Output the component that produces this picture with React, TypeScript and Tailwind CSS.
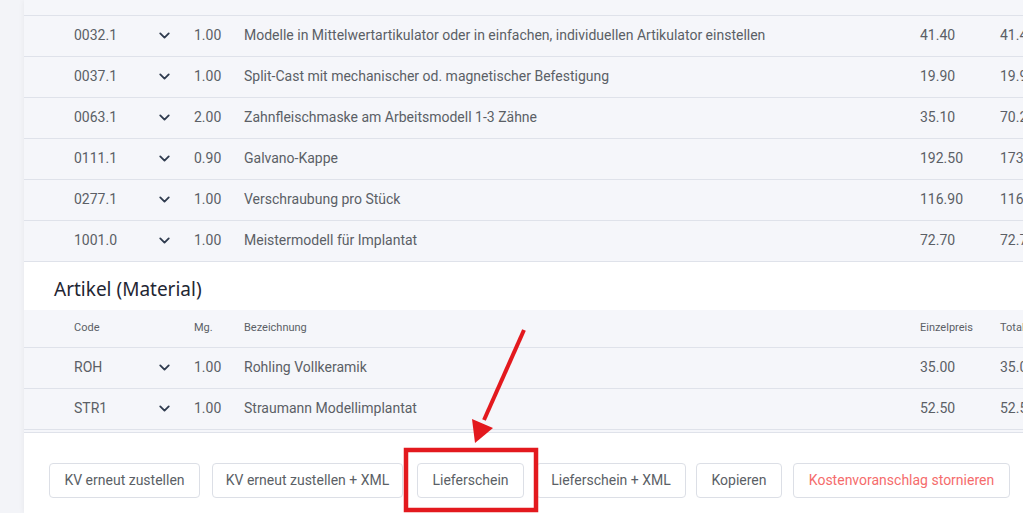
import { ChevronDown } from "lucide-react";

const leistungen = [
  { code: "0032.1", qty: "1.00", text: "Modelle in Mittelwertartikulator oder in einfachen, individuellen Artikulator einstellen", price: "41.40", total: "41.40" },
  { code: "0037.1", qty: "1.00", text: "Split-Cast mit mechanischer od. magnetischer Befestigung", price: "19.90", total: "19.90" },
  { code: "0063.1", qty: "2.00", text: "Zahnfleischmaske am Arbeitsmodell 1-3 Zähne", price: "35.10", total: "70.20" },
  { code: "0111.1", qty: "0.90", text: "Galvano-Kappe", price: "192.50", total: "173.25" },
  { code: "0277.1", qty: "1.00", text: "Verschraubung pro Stück", price: "116.90", total: "116.90" },
  { code: "1001.0", qty: "1.00", text: "Meistermodell für Implantat", price: "72.70", total: "72.70" },
];

const material = [
  { code: "ROH", qty: "1.00", text: "Rohling Vollkeramik", price: "35.00", total: "35.00" },
  { code: "STR1", qty: "1.00", text: "Straumann Modellimplantat", price: "52.50", total: "52.50" },
];

const grid = "grid grid-cols-[84px_36px_50px_676px_80px_80px] pl-[50px] items-center";

type Row = { code: string; qty: string; text: string; price: string; total: string };

function TableRow({ row }: { row: Row }) {
  return (
    <div className={`${grid} h-[41px] border-b border-[#dfe2ea] pb-[2px] text-[14px] text-[#5b5f66]`}>
      <span>{row.code}</span>
      <span>
        <ChevronDown size={17} strokeWidth={2.6} className="-ml-[2px] text-[#2f3b4f]" />
      </span>
      <span>{row.qty}</span>
      <span className="whitespace-nowrap">{row.text}</span>
      <span>{row.price}</span>
      <span>{row.total}</span>
    </div>
  );
}

const buttons = [
  { label: "KV erneut zustellen", cls: "w-[151px]" },
  { label: "KV erneut zustellen + XML", cls: "ml-[12px] w-[191px]" },
  { label: "Lieferschein", cls: "ml-[14px] w-[107px]" },
  { label: "Lieferschein + XML", cls: "ml-[12px] w-[150px]" },
  { label: "Kopieren", cls: "ml-[10px] w-[86px]" },
];

export default function App() {
  return (
    <div
      className="relative h-[513px] w-[1023px] overflow-hidden bg-[#f3f4f8]"
      style={{ fontFamily: "Roboto, 'Liberation Sans', sans-serif" }}
    >
      <div className="ml-[24px] flex h-full w-[1100px] flex-col bg-white shadow-[0_0_6px_rgba(0,0,0,0.06)]">
        <div className="bg-[#f5f6fa]">
          <div className="h-[16px] border-b border-[#dfe2ea]" />
          {leistungen.map((r) => (
            <TableRow key={r.code} row={r} />
          ))}
        </div>

        <div className="flex h-[48px] items-center pl-[30px]">
          <h2
            className="pt-[7px] text-[19px] text-[#1f2633]"
            style={{ fontFamily: "'Noto Sans', Inter, sans-serif" }}
          >
            Artikel (Material)
          </h2>
        </div>

        <div className="bg-[#f5f6fa]">
          <div className={`${grid} h-[38px] border-b border-[#dfe2ea] text-[11px] text-[#5b5f66]`}>
            <span>Code</span>
            <span />
            <span>Mg.</span>
            <span>Bezeichnung</span>
            <span>Einzelpreis</span>
            <span>Total</span>
          </div>
          {material.map((r) => (
            <TableRow key={r.code} row={r} />
          ))}
          <div className="h-[3px] border-b border-[#dfe2ea]" />
        </div>

        <div className="flex items-start pl-[25px] pt-[30px]">
          {buttons.map((b) => (
            <button
              key={b.label}
              className={`${b.cls} h-[35px] rounded-[4px] border border-[#dcdfe6] bg-white text-[14px] text-[#5b5f66]`}
            >
              {b.label}
            </button>
          ))}
          <button className="ml-[11px] h-[35px] w-[217px] rounded-[4px] border border-[#dcdfe6] bg-white text-[14px] text-[#f56c6c]">
            Kostenvoranschlag stornieren
          </button>
        </div>
      </div>

      <svg className="pointer-events-none absolute left-0 top-0" width="1023" height="513">
        <rect x="406" y="450" width="130" height="60" fill="none" stroke="#e3191e" strokeWidth="4.5" />
        <line x1="524" y1="330" x2="484" y2="420" stroke="#e3191e" strokeWidth="4" />
        <polygon points="472,419 493,428 475,443" fill="#e3191e" />
      </svg>
    </div>
  );
}
